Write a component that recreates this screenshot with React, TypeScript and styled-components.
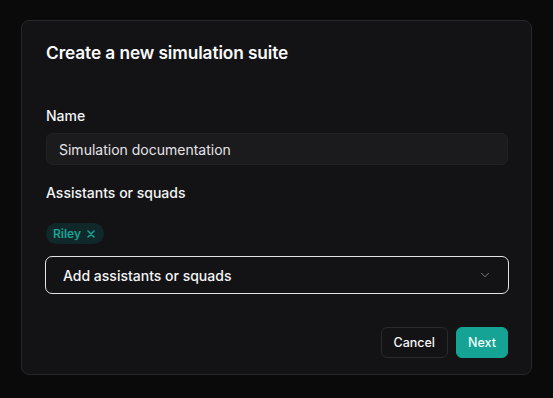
import React from 'react';
import styled, { createGlobalStyle } from 'styled-components';

const GlobalStyle = createGlobalStyle`
  html, body {
    margin: 0;
    padding: 0;
    background: #0a0a0b;
    font-family: Inter, "Noto Sans", sans-serif;
    color: #f4f4f5;
  }
`;

const Page = styled.div`
  width: 553px;
  height: 398px;
  padding: 20px 21px 0;
  box-sizing: border-box;
`;

const Card = styled.div`
  background: #131316;
  border: 1px solid #27272a;
  border-radius: 8px;
  padding: 20px 23px 16px 24px;
  display: flex;
  flex-direction: column;
`;

const Title = styled.h2`
  margin: 0;
  font-size: 17.3px;
  line-height: 24px;
  font-weight: 600;
  color: #fafafa;
  letter-spacing: -0.1px;
`;

const Field = styled.div<{ top: number }>`
  display: flex;
  flex-direction: column;
  margin-top: ${(p) => p.top}px;
`;

const Label = styled.label`
  font-size: 14px;
  line-height: 20px;
  font-weight: 500;
  color: #f4f4f5;
`;

const Input = styled.div`
  margin-top: 7px;
  height: 32px;
  background: #1b1b1e;
  border: 1px solid #202023;
  border-radius: 6px;
  box-sizing: border-box;
  padding: 0 12px;
  display: flex;
  align-items: center;
  font-size: 14px;
  color: #e4e4e7;
`;

const Chips = styled.div`
  margin-top: 20px;
  display: flex;
  gap: 6px;
`;

const Chip = styled.span`
  height: 21px;
  display: inline-flex;
  align-items: center;
  gap: 5px;
  padding: 0 8px 0 7px;
  border-radius: 11px;
  background: #10282a;
  color: #19a394;
  font-size: 12px;
  font-weight: 600;
`;

const Select = styled.div`
  margin: 12px -1px 0;
  height: 38px;
  border: 1.5px solid #e4e4e7;
  border-radius: 7px;
  box-sizing: border-box;
  padding: 0 16px 0 17px;
  display: flex;
  align-items: center;
  justify-content: space-between;
  font-size: 14px;
  font-weight: 500;
  color: #f4f4f5;
`;

const Footer = styled.div`
  margin-top: 33px;
  display: flex;
  justify-content: flex-end;
  gap: 8px;
`;

const Button = styled.button<{ primary?: boolean }>`
  height: 31px;
  padding: 0 ${(p) => (p.primary ? 11 : 12)}px;
  border-radius: 6px;
  font-family: inherit;
  font-size: 12.5px;
  font-weight: 500;
  border: 1px solid ${(p) => (p.primary ? '#14a394' : '#2a2a2e')};
  background: ${(p) => (p.primary ? '#14a394' : '#131316')};
  color: ${(p) => (p.primary ? '#f0fdfa' : '#f4f4f5')};
  cursor: pointer;
`;

const App: React.FC = () => {
  return (
    <Page>
      <GlobalStyle />
      <Card>
        <Title>Create a new simulation suite</Title>
        <Field top={41}>
          <Label>Name</Label>
          <Input>Simulation documentation</Input>
        </Field>
        <Field top={18}>
          <Label>Assistants or squads</Label>
        </Field>
        <Chips>
          <Chip>
            Riley
            <svg width="10" height="10" viewBox="0 0 10 10" fill="none" stroke="currentColor" strokeWidth="1.6" strokeLinecap="round">
              <path d="M2 2 L8 8 M8 2 L2 8" />
            </svg>
          </Chip>
        </Chips>
        <Select>
          Add assistants or squads
          <svg width="14" height="14" viewBox="0 0 24 24" fill="none" stroke="#8a8a90" strokeWidth="1.5" strokeLinecap="round" strokeLinejoin="round">
            <path d="M6 9l6 6 6-6" />
          </svg>
        </Select>
        <Footer>
          <Button>Cancel</Button>
          <Button primary>Next</Button>
        </Footer>
      </Card>
    </Page>
  );
};

export default App;
